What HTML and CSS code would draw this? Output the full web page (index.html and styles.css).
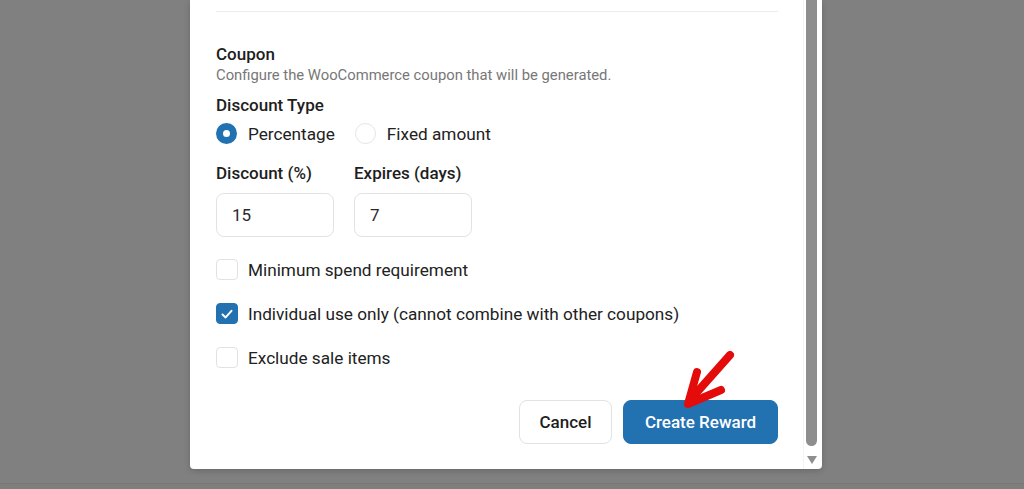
FILE: index.html
```html
<!DOCTYPE html>
<html lang="en">
<head>
<meta charset="utf-8">
<title>Create Reward</title>
<link rel="stylesheet" href="styles.css">
</head>
<body>
<div class="backdrop">
  <div class="modal">
    <div class="content">
      <div class="divider"></div>
      <div class="section-title">Coupon</div>
      <div class="section-desc">Configure the WooCommerce coupon that will be generated.</div>
      <div class="field-title">Discount Type</div>
      <div class="radio-row">
        <label class="radio-opt"><span class="radio checked"></span><span>Percentage</span></label>
        <label class="radio-opt"><span class="radio"></span><span>Fixed amount</span></label>
      </div>
      <div class="inputs-row">
        <div class="field">
          <div class="field-label">Discount (%)</div>
          <div class="text-input">15</div>
        </div>
        <div class="field">
          <div class="field-label">Expires (days)</div>
          <div class="text-input">7</div>
        </div>
      </div>
      <div class="checks">
        <label class="check-row"><span class="checkbox"></span><span>Minimum spend requirement</span></label>
        <label class="check-row"><span class="checkbox checked"><svg viewBox="0 0 20 20" width="20" height="20"><path d="M5.5 10.5 L8.6 13.4 L14.5 6.8" fill="none" stroke="#fff" stroke-width="2" stroke-linecap="round" stroke-linejoin="round"/></svg></span><span>Individual use only (cannot combine with other coupons)</span></label>
        <label class="check-row"><span class="checkbox"></span><span>Exclude sale items</span></label>
      </div>
      <div class="actions">
        <button class="btn btn-secondary">Cancel</button>
        <button class="btn btn-primary">Create Reward</button>
      </div>
    </div>
    <div class="scrollbar">
      <div class="thumb"></div>
      <div class="arrow-down"></div>
    </div>
  </div>
  <div class="page-edge"></div>
</div>
<svg class="pointer" width="70" height="80" viewBox="0 0 70 80">
  <g fill="none" stroke="#e40b0b" stroke-width="8" stroke-linecap="round" stroke-linejoin="round">
    <path d="M51 12 L11 57"/>
    <path d="M18 29 L9 61 L42 47"/>
  </g>
</svg>
</body>
</html>
```
FILE: styles.css
```css
html, body {
  margin: 0;
  padding: 0;
}
body {
  background: #808080;
  font-family: Roboto, "Liberation Sans", Arial, sans-serif;
  color: #1e1e1e;
  width: 1024px;
  height: 489px;
  overflow: hidden;
}
.backdrop {
  display: flex;
  flex-direction: column;
  height: 489px;
}
.modal {
  margin-left: 190px;
  width: 632px;
  height: 469px;
  background: #fff;
  border-radius: 0 0 4px 4px;
  box-shadow: 0 2px 6px rgba(0, 0, 0, 0.18);
  display: flex;
  flex: none;
}
.content {
  flex: 1;
  padding: 0 25px 0 26px;
  display: flex;
  flex-direction: column;
}
.divider {
  margin-top: 11px;
  height: 1px;
  background: #ececec;
}
.section-title {
  margin-top: 32px;
  font-size: 17px;
  line-height: 20px;
  font-weight: 500;
}
.section-desc {
  margin-top: 2px;
  font-size: 14.8px;
  line-height: 18px;
  color: #777;
}
.field-title {
  margin-top: 11px;
  font-size: 17px;
  line-height: 20px;
  font-weight: 500;
}
.radio-row {
  margin-top: 8px;
  display: flex;
  gap: 20px;
  height: 21px;
  align-items: center;
}
.radio-opt {
  display: flex;
  align-items: center;
  gap: 11px;
  font-size: 17.2px;
  line-height: 20px;
  color: #222;
}
.radio {
  width: 21px;
  height: 21px;
  box-sizing: border-box;
  border-radius: 50%;
  border: 1px solid #e4e4e4;
  background: #fff;
}
.radio.checked {
  border: 7px solid #2271b1;
}
.inputs-row {
  margin-top: 19px;
  display: flex;
  gap: 20px;
}
.field {
  width: 118px;
}
.field-label {
  font-size: 17px;
  line-height: 20px;
  font-weight: 500;
}
.text-input {
  margin-top: 10px;
  height: 44px;
  box-sizing: border-box;
  border: 1px solid #e2e2e2;
  border-radius: 8px;
  padding-left: 15px;
  display: flex;
  align-items: center;
  font-size: 17px;
  color: #2a2a2a;
}
.checks {
  margin-top: 22px;
  display: flex;
  flex-direction: column;
  gap: 23px;
}
.check-row {
  display: flex;
  align-items: center;
  gap: 10px;
  height: 21px;
  font-size: 17.2px;
  color: #222;
}
.checkbox {
  width: 22px;
  height: 21px;
  box-sizing: border-box;
  border: 1px solid #e2e2e2;
  border-radius: 4px;
  display: flex;
  align-items: center;
  justify-content: center;
}
.checkbox.checked {
  background: #2271b1;
  border-color: #2271b1;
}
.actions {
  margin-top: 32px;
  display: flex;
  justify-content: flex-end;
  gap: 11px;
}
.btn {
  height: 44px;
  border-radius: 8px;
  font-family: Roboto, "Liberation Sans", Arial, sans-serif;
  font-size: 17px;
  font-weight: 500;
  cursor: pointer;
  padding: 0;
}
.btn-secondary {
  width: 93px;
  background: #fff;
  border: 1px solid #e2e2e2;
  color: #1e1e1e;
}
.btn-primary {
  width: 155px;
  background: #2271b1;
  border: 1px solid #2271b1;
  color: #fff;
}
.scrollbar {
  width: 19px;
  flex: none;
  display: flex;
  flex-direction: column;
  align-items: flex-start;
  border-left: 1px solid #f4f4f4;
  box-sizing: border-box;
}
.thumb {
  margin-left: 2px;
  width: 11px;
  height: 446px;
  background: #8e8e8e;
  border-radius: 0 0 6px 6px;
}
.arrow-down {
  margin-left: 3px;
  margin-top: 10px;
  width: 0;
  height: 0;
  border-left: 5px solid transparent;
  border-right: 5px solid transparent;
  border-top: 8px solid #8e8e8e;
}
.page-edge {
  margin-top: 14px;
  flex: 1;
  border-top: 1px solid #777;
  background: #7e7e7e;
}
.pointer {
  position: absolute;
  left: 679px;
  top: 343px;
}
```
